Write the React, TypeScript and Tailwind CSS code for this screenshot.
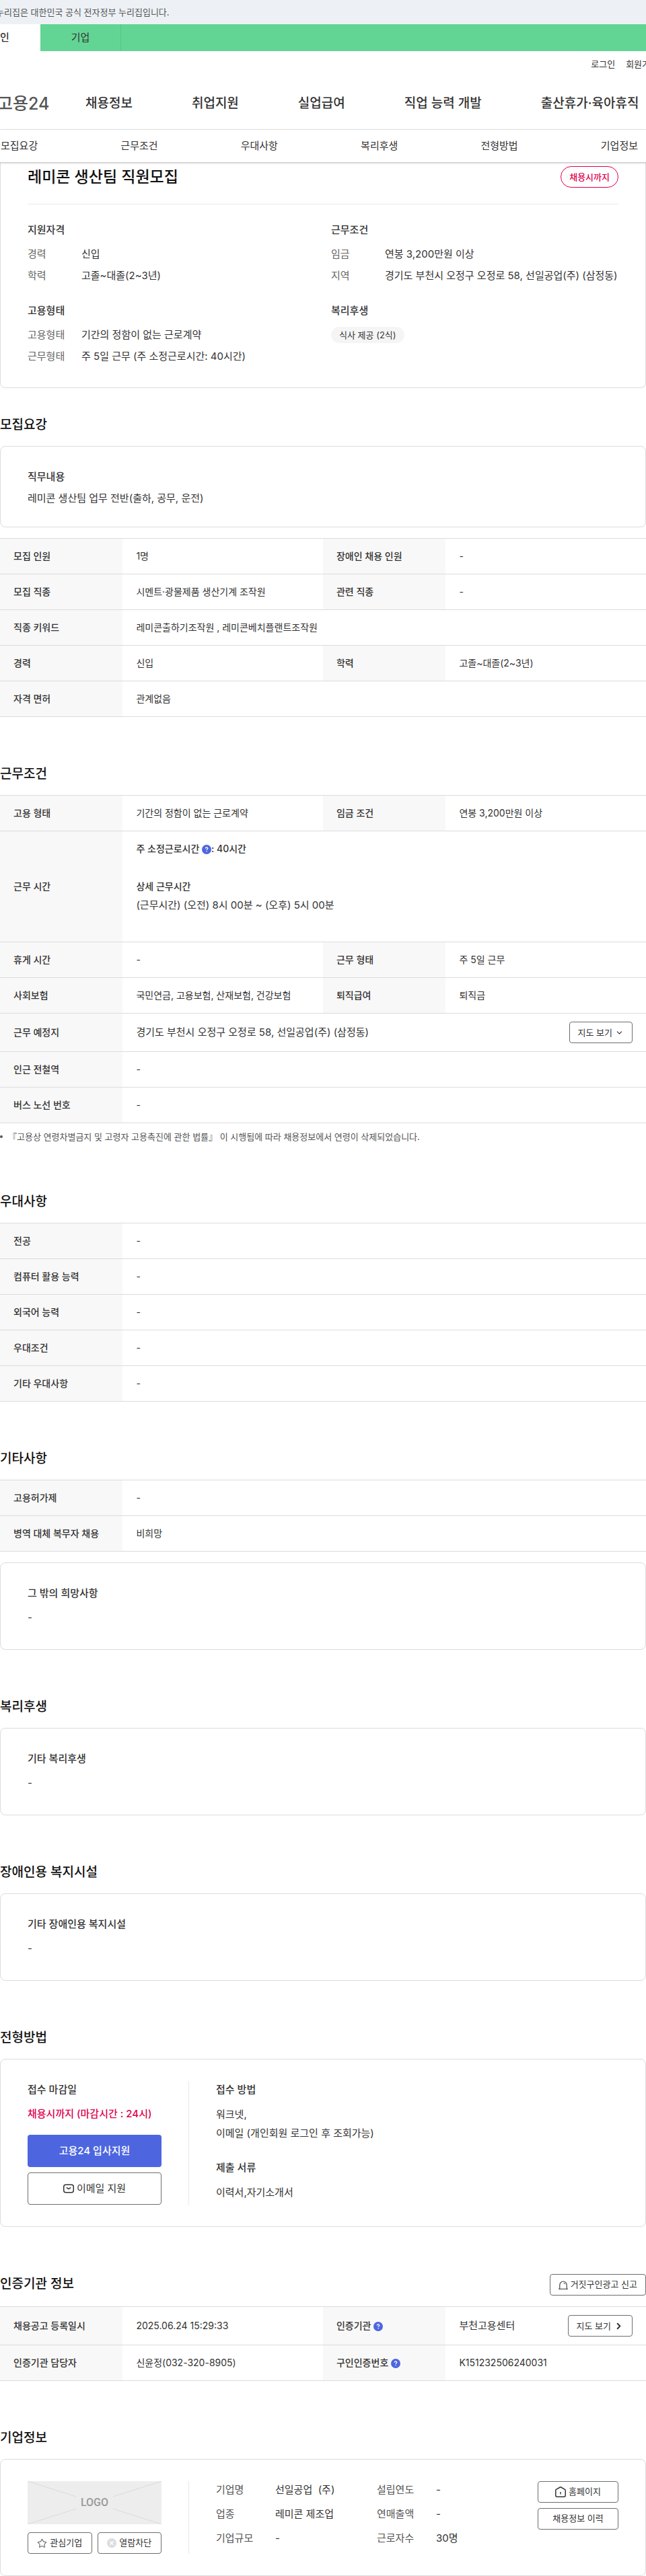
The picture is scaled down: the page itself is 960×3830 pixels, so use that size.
import type { FC, ReactNode } from "react";
import { ChevronDown, ChevronRight, Star } from "lucide-react";

const mainMenu = [
  "채용정보",
  "취업지원",
  "실업급여",
  "직업 능력 개발",
  "출산휴가·육아휴직",
];

const pageTabs = [
  "모집요강",
  "근무조건",
  "우대사항",
  "복리후생",
  "전형방법",
  "기업정보",
];

type Cell = { label: ReactNode; value: ReactNode };

/* ---------- Icons ---------- */

const HelpButton: FC<{ label: string }> = ({ label }) => (
  <button type="button" aria-label={label} className="inline-block align-middle">
    <svg width="14" height="14" viewBox="0 0 14 14" fill="none">
      <circle cx="7" cy="7" r="7" fill="#4d66e0" />
      <path
        d="M5.3 5.6c0-1 .7-1.7 1.7-1.7s1.7.6 1.7 1.5c0 1.2-1.6 1.2-1.6 2.4"
        stroke="#fff"
        strokeWidth="1.3"
      />
      <circle cx="7.1" cy="9.8" r=".8" fill="#fff" />
    </svg>
  </button>
);

const MailIcon: FC = () => (
  <svg width="16" height="14" viewBox="0 0 16 14" fill="none" stroke="#333">
    <rect x=".75" y="1.25" width="14.5" height="11.5" rx="3" strokeWidth="1.5" />
    <path d="M4.8 5.3 8 7.6l3.2-2.3" strokeWidth="1.5" />
  </svg>
);

const SirenIcon: FC = () => (
  <svg width="14" height="13" viewBox="0 0 14 13" fill="none" stroke="#333">
    <path d="M1.8 12V6.2a5.2 5.2 0 0 1 10.4 0V12M0 12.2h14" strokeWidth="1.1" />
    <path d="M7.8 3.4c.9.1 1.6.8 1.9 1.7" />
  </svg>
);

const HomeIcon: FC = () => (
  <svg width="16" height="16" viewBox="0 0 16 16" fill="none" stroke="#333">
    <path
      d="M.8 5.6c0-.5.2-.9.7-1.2L7.3 1c.4-.3 1-.3 1.4 0l5.8 3.4c.5.3.7.7.7 1.2v7.6c0 1.1-.9 2-2 2H2.8c-1.1 0-2-.9-2-2z"
      strokeWidth="1.5"
    />
    <path d="M8 8v3.6" strokeWidth="1.4" />
  </svg>
);

const BlockIcon: FC = () => (
  <svg width="14" height="14" viewBox="0 0 14 14" fill="none">
    <circle cx="7" cy="7" r="7" fill="#dcdcdc" />
    <path d="m4.2 4.2 5.6 5.6m0-5.6L4.2 9.8" stroke="#fff" strokeWidth="1.5" />
  </svg>
);

/* ---------- Shared parts ---------- */

const SmallButton: FC<{ children: ReactNode; className?: string }> = ({
  children,
  className = "",
}) => (
  <button
    type="button"
    className={`flex h-8 shrink-0 items-center justify-center rounded border border-[#6d6d6d] bg-white text-[13px] whitespace-nowrap text-[#333] ${className}`}
  >
    {children}
  </button>
);

const Section: FC<{
  title: string;
  action?: ReactNode;
  className?: string;
  children: ReactNode;
}> = ({ title, action, className = "mt-[70px]", children }) => (
  <section className={className}>
    <div className="mb-4 flex items-start justify-between">
      <h2 className="text-[19px] leading-[30px] font-medium text-[#111]">
        {title}
      </h2>
      {action}
    </div>
    {children}
  </section>
);

const InfoTable: FC<{ rows: Cell[][] }> = ({ rows }) => (
  <table className="w-full table-fixed border-t border-[#dcdcdc] text-left text-sm leading-7">
    <colgroup>
      <col className="w-[19%]" />
      <col className="w-[31%]" />
      <col className="w-[19%]" />
      <col className="w-[31%]" />
    </colgroup>
    <tbody>
      {rows.map((cells, i) => (
        <tr key={i} className="border-b border-[#dcdcdc]">
          {cells.map((cell, j) => (
            <Pair key={j} cell={cell} wide={cells.length === 1} />
          ))}
        </tr>
      ))}
    </tbody>
  </table>
);

const Pair: FC<{ cell: Cell; wide: boolean }> = ({ cell, wide }) => (
  <>
    <th
      scope="row"
      className="bg-[#f8f8f8] px-5 py-3 font-medium whitespace-nowrap text-[#333]"
    >
      {cell.label}
    </th>
    <td colSpan={wide ? 3 : 1} className="px-5 py-3 text-[#333]">
      {cell.value}
    </td>
  </>
);

const TextCard: FC<{ title: string }> = ({ title }) => (
  <div className="rounded-lg border border-[#dcdcdc] px-10 pt-[33px] pb-[35px] text-[15px] leading-6 text-[#333]">
    <h3 className="font-medium">{title}</h3>
    <p className="mt-3">-</p>
  </div>
);

const SummaryGroup: FC<{ title: string; items?: [string, string][]; children?: ReactNode }> = ({
  title,
  items,
  children,
}) => (
  <div>
    <h3 className="mb-3 font-medium text-[#333]">{title}</h3>
    {items && (
      <dl className="space-y-2">
        {items.map(([label, value]) => (
          <div key={label} className="flex">
            <dt className="w-20 shrink-0 text-[#666]">{label}</dt>
            <dd className="whitespace-nowrap text-[#333]">{value}</dd>
          </div>
        ))}
      </dl>
    )}
    {children}
  </div>
);

/* ---------- Header ---------- */

const Header: FC = () => (
  <header className="text-[#333]">
    <div className="h-9 overflow-hidden bg-[#edf1f5]">
      <p className="-ml-1.5 text-[13px] leading-9 whitespace-nowrap text-[#555]">
        누리집은 대한민국 공식 전자정부 누리집입니다.
      </p>
    </div>

    <div className="flex h-10 bg-[#62d594] text-[15px] leading-10">
      <a href="#" className="w-[60px] bg-white font-medium">
        인
      </a>
      <a href="#" className="w-[120px] border-r border-[#54c686] text-center">
        기업
      </a>
    </div>

    <div className="overflow-hidden">
      <div className="-mr-4.5 flex h-10 items-center justify-end gap-4 text-[13px]">
        <a href="#">로그인</a>
        <a href="#">회원가입</a>
      </div>
    </div>

    <div className="flex h-[77px] items-center overflow-hidden border-b border-[#eee] whitespace-nowrap">
      <a
        href="#"
        className="-ml-1 w-[131px] shrink-0 text-[25px] leading-9 font-medium text-[#555]"
      >
        고용24
      </a>
      <nav className="flex gap-22 text-[19px] font-medium">
        {mainMenu.map((item) => (
          <a key={item} href="#">
            {item}
          </a>
        ))}
      </nav>
    </div>

    <nav className="relative flex h-12 items-center justify-between bg-white pr-3 pl-px text-[15px] shadow-[0_1px_3px_rgba(0,0,0,0.3)]">
      {pageTabs.map((tab) => (
        <a key={tab} href="#">
          {tab}
        </a>
      ))}
    </nav>
  </header>
);

/* ---------- Page ---------- */

const Summary: FC = () => (
  <div className="rounded-b-lg border border-t-0 border-[#dcdcdc] px-10 pt-1.5 pb-[34px]">
    <div className="flex items-center justify-between border-b border-[#e8e8e8] pb-6">
      <h1 className="text-[23px] leading-8 font-medium text-[#111]">
        레미콘 생산팀 직원모집
      </h1>
      <span className="h-8 rounded-full border border-[#e0004d] px-3 text-[13px] leading-[30px] font-medium text-[#e0004d]">
        채용시까지
      </span>
    </div>

    <div className="grid grid-cols-2 gap-x-6 gap-y-7 pt-[26px] text-[15px] leading-6">
      <SummaryGroup
        title="지원자격"
        items={[
          ["경력", "신입"],
          ["학력", "고졸~대졸(2~3년)"],
        ]}
      />
      <SummaryGroup
        title="근무조건"
        items={[
          ["임금", "연봉 3,200만원 이상"],
          ["지역", "경기도 부천시 오정구 오정로 58, 선일공업(주) (삼정동)"],
        ]}
      />
      <SummaryGroup
        title="고용형태"
        items={[
          ["고용형태", "기간의 정함이 없는 근로계약"],
          ["근무형태", "주 5일 근무 (주 소정근로시간: 40시간)"],
        ]}
      />
      <SummaryGroup title="복리후생">
        <span className="block w-fit rounded-full bg-[#f5f5f5] px-3 text-[13px] text-[#333]">
          식사 제공 (2식)
        </span>
      </SummaryGroup>
    </div>
  </div>
);

const WorkHours: FC = () => (
  <>
    <p className="font-medium">
      주 소정근로시간 <HelpButton label="주 소정근로시간 도움말" />: 40시간
    </p>
    <p className="mt-7 font-medium">상세 근무시간</p>
    <p className="mb-7 text-[15px]">
      (근무시간) (오전) 8시 00분 ~ (오후) 5시 00분
    </p>
  </>
);

const WorkPlace: FC = () => (
  <div className="flex items-center justify-between text-[15px]">
    경기도 부천시 오정구 오정로 58, 선일공업(주) (삼정동)
    <SmallButton className="gap-1 px-3">
      지도 보기 <ChevronDown size={13} />
    </SmallButton>
  </div>
);

const Apply: FC = () => (
  <div className="flex rounded-lg border border-[#dcdcdc] px-10 py-8 text-[15px] text-[#333]">
    <div className="mr-10 w-[199px] shrink-0">
      <h3 className="leading-[26px] font-medium">접수 마감일</h3>
      <p className="mt-[10px] leading-[26px] font-medium whitespace-nowrap text-[#e0004d]">
        채용시까지 (마감시간 : 24시)
      </p>
      <button
        type="button"
        className="mt-[18px] block h-12 w-full rounded bg-[#4d66e0] font-medium text-white"
      >
        고용24 입사지원
      </button>
      <button
        type="button"
        className="mt-2 flex h-12 w-full items-center justify-center gap-1 rounded border border-[#6d6d6d]"
      >
        <MailIcon /> 이메일 지원
      </button>
    </div>
    <div className="border-l border-[#e8e8e8] pl-10">
      <h3 className="leading-[26px] font-medium">접수 방법</h3>
      <p className="mt-[10px] leading-7">
        워크넷,
        <br />
        이메일 (개인회원 로그인 후 조회가능)
      </p>
      <h3 className="mt-6 leading-[26px] font-medium">제출 서류</h3>
      <p className="mt-[10px] leading-7">이력서,자기소개서</p>
    </div>
  </div>
);

const companyInfo = [
  ["기업명", "선일공업  (주)"],
  ["설립연도", "-"],
  ["업종", "레미콘 제조업"],
  ["연매출액", "-"],
  ["기업규모", "-"],
  ["근로자수", "30명"],
];

const Company: FC = () => (
  <div className="flex rounded-lg border border-[#dcdcdc] px-10 py-8 text-[15px]">
    <div className="mr-10 w-[199px] shrink-0">
      <div className="relative flex h-16 items-center justify-center bg-[#ededed]">
        <svg
          viewBox="0 0 199 64"
          className="absolute inset-0 h-full w-full"
          stroke="#dadada"
        >
          <path d="M0 0l72 23M199 0l-72 23M0 64l72-23M199 64l-72-23" />
        </svg>
        <span className="font-['Roboto',sans-serif] text-base font-medium text-[#999]">
          LOGO
        </span>
      </div>
      <div className="mt-3 flex gap-2">
        <SmallButton className="flex-1 gap-1">
          <Star size={15} strokeWidth={1.8} color="#6d6d6d" /> 관심기업
        </SmallButton>
        <SmallButton className="flex-1 gap-1">
          <BlockIcon /> 열람차단
        </SmallButton>
      </div>
    </div>

    <dl className="grid flex-1 grid-cols-2 content-start gap-y-[10px] border-l border-[#e8e8e8] pl-10 leading-[26px]">
      {companyInfo.map(([label, value]) => (
        <div key={label} className="flex">
          <dt className="w-[88px] shrink-0 text-[#555]">{label}</dt>
          <dd className="whitespace-pre text-[#333]">{value}</dd>
        </div>
      ))}
    </dl>

    <div className="w-[120px] shrink-0 space-y-2">
      <SmallButton className="w-full gap-1">
        <HomeIcon /> 홈페이지
      </SmallButton>
      <SmallButton className="w-full">채용정보 이력</SmallButton>
    </div>
  </div>
);

const App: FC = () => {
  return (
    <div className="bg-white font-['Inter','Noto_Sans_CJK_KR',sans-serif]">
      <Header />

      <main>
        <Summary />

        <Section title="모집요강" className="mt-10">
          <div className="mb-4 rounded-lg border border-[#dcdcdc] px-10 pt-[33px] pb-[30px] text-[15px] leading-6 text-[#333]">
            <h3 className="font-medium">직무내용</h3>
            <p className="mt-2">레미콘 생산팀 업무 전반(출하, 공무, 운전)</p>
          </div>
          <InfoTable
            rows={[
              [
                { label: "모집 인원", value: "1명" },
                { label: "장애인 채용 인원", value: "-" },
              ],
              [
                { label: "모집 직종", value: "시멘트·광물제품 생산기계 조작원" },
                { label: "관련 직종", value: "-" },
              ],
              [
                {
                  label: "직종 키워드",
                  value: "레미콘출하기조작원 , 레미콘베치플랜트조작원",
                },
              ],
              [
                { label: "경력", value: "신입" },
                { label: "학력", value: "고졸~대졸(2~3년)" },
              ],
              [{ label: "자격 면허", value: "관계없음" }],
            ]}
          />
        </Section>

        <Section title="근무조건">
          <InfoTable
            rows={[
              [
                { label: "고용 형태", value: "기간의 정함이 없는 근로계약" },
                { label: "임금 조건", value: "연봉 3,200만원 이상" },
              ],
              [{ label: "근무 시간", value: <WorkHours /> }],
              [
                { label: "휴게 시간", value: "-" },
                { label: "근무 형태", value: "주 5일 근무" },
              ],
              [
                {
                  label: "사회보험",
                  value: "국민연금, 고용보험, 산재보험, 건강보험",
                },
                { label: "퇴직급여", value: "퇴직금" },
              ],
              [{ label: "근무 예정지", value: <WorkPlace /> }],
              [{ label: "인근 전철역", value: "-" }],
              [{ label: "버스 노선 번호", value: "-" }],
            ]}
          />
          <p className="mt-2 flex items-center gap-2 text-[13px] leading-6 text-[#555]">
            <span className="size-1 rounded-full bg-[#555]" />
            『고용상 연령차별금지 및 고령자 고용촉진에 관한 법률』 이 시행됨에
            따라 채용정보에서 연령이 삭제되었습니다.
          </p>
        </Section>

        <Section title="우대사항">
          <InfoTable
            rows={[
              [{ label: "전공", value: "-" }],
              [{ label: "컴퓨터 활용 능력", value: "-" }],
              [{ label: "외국어 능력", value: "-" }],
              [{ label: "우대조건", value: "-" }],
              [{ label: "기타 우대사항", value: "-" }],
            ]}
          />
        </Section>

        <Section title="기타사항">
          <div className="mb-4">
            <InfoTable
              rows={[
                [{ label: "고용허가제", value: "-" }],
                [{ label: "병역 대체 복무자 채용", value: "비희망" }],
              ]}
            />
          </div>
          <TextCard title="그 밖의 희망사항" />
        </Section>

        <Section title="복리후생">
          <TextCard title="기타 복리후생" />
        </Section>

        <Section title="장애인용 복지시설">
          <TextCard title="기타 장애인용 복지시설" />
        </Section>

        <Section title="전형방법">
          <Apply />
        </Section>

        <Section
          title="인증기관 정보"
          action={
            <SmallButton className="gap-1 px-3">
              <SirenIcon /> 거짓구인광고 신고
            </SmallButton>
          }
        >
          <InfoTable
            rows={[
              [
                { label: "채용공고 등록일시", value: "2025.06.24 15:29:33" },
                {
                  label: (
                    <>
                      인증기관 <HelpButton label="인증기관 도움말" />
                    </>
                  ),
                  value: (
                    <div className="flex items-center justify-between text-[15px]">
                      부천고용센터
                      <SmallButton className="gap-1 px-3">
                        지도 보기 <ChevronRight size={15} strokeWidth={3} />
                      </SmallButton>
                    </div>
                  ),
                },
              ],
              [
                { label: "인증기관 담당자", value: "신윤정(032-320-8905)" },
                {
                  label: (
                    <>
                      구인인증번호 <HelpButton label="구인인증번호 도움말" />
                    </>
                  ),
                  value: "K151232506240031",
                },
              ],
            ]}
          />
        </Section>

        <Section title="기업정보">
          <Company />
        </Section>
      </main>
    </div>
  );
};

export default App;
